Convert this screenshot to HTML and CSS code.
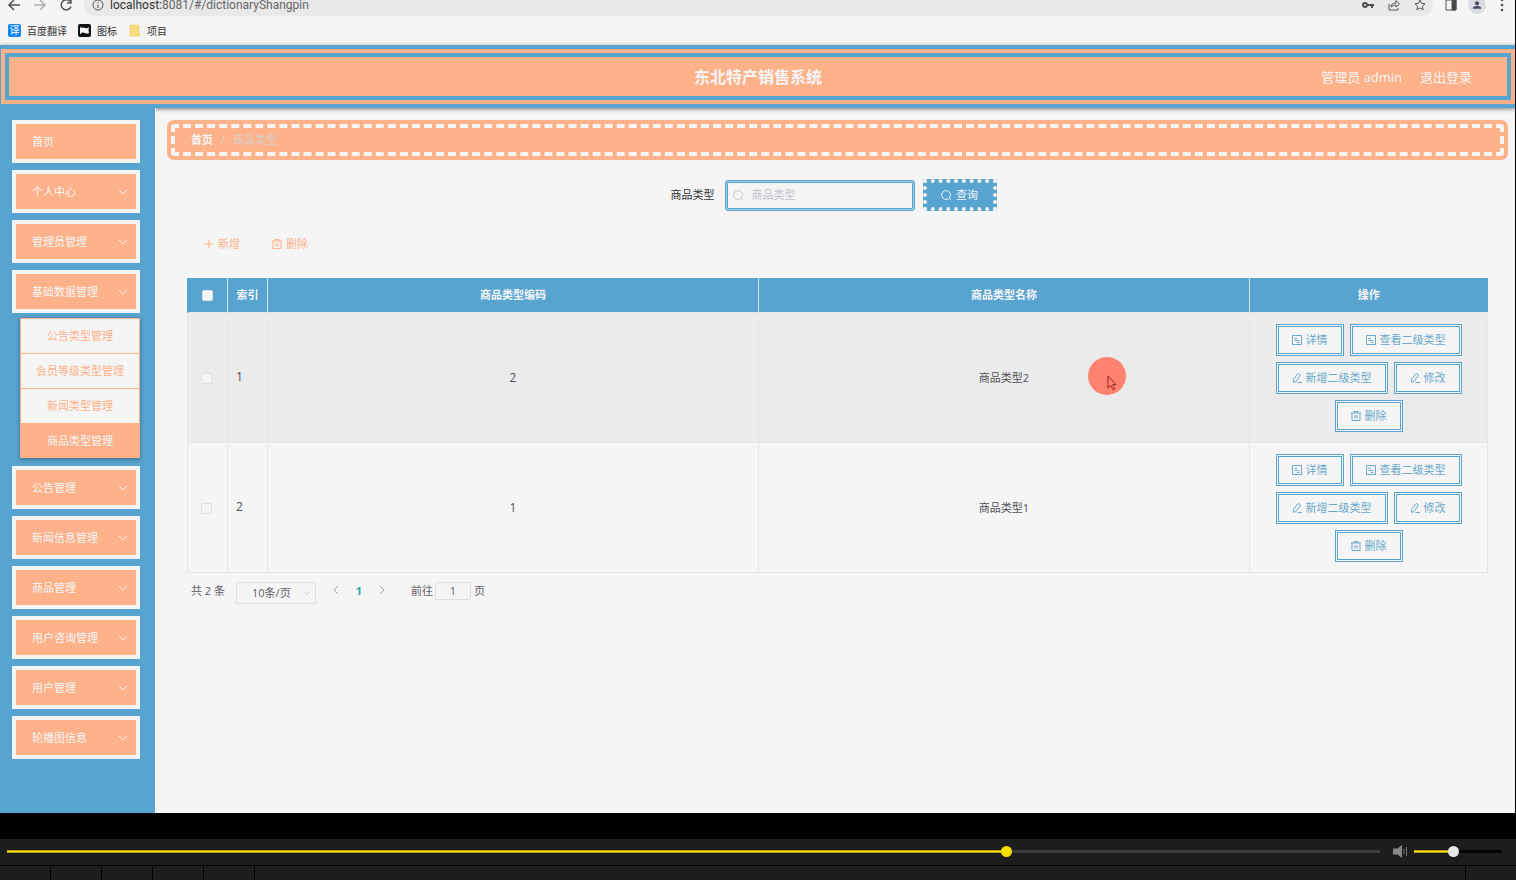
FILE: index.html
```html
<!DOCTYPE html>
<html lang="zh-CN">
<head>
    <meta charset="UTF-8">
    <meta name="viewport" content="width=device-width, initial-scale=1.0">
    <title>东北特产销售系统</title>
    <link rel="stylesheet" href="styles.css">
</head>
<body>
    <svg class="symbols" width="0" height="0">
        <symbol id="i-down" viewBox="0 0 10 10"><path d="M1 3l4 4 4-4"/></symbol>
        <symbol id="i-search" viewBox="0 0 12 12"><circle cx="5.5" cy="5.5" r="4.8"/><path d="M9 9l2 2"/></symbol>
        <symbol id="i-plus" viewBox="0 0 10 10"><path d="M5 .5v9M.5 5h9"/></symbol>
        <symbol id="i-trash" viewBox="0 0 10 10"><path d="M0 2h10M3 2V.5h4V2M1 2v7.500h8V2M4 4v3.500M6 4v3.500"/></symbol>
        <symbol id="i-doc" viewBox="0 0 10 10"><path d="M.5.5h9v9h-9zM2.500 3.500H5M2.500 5.500h5M5 7.500h2.500"/></symbol>
        <symbol id="i-edit" viewBox="0 0 10 10"><path d="M1.500 6.500l4-5.500q1-.8 2 0t.5 2L4 8.500l-2.500.8zM5.500 9.500H10"/></symbol>
    </svg>

    <div class="browser">
        <div class="toolbar">
            <svg class="nav-icon" viewBox="0 0 16 16"><path d="M14 8H3M8 3L3 8l5 5"/></svg>
            <svg class="nav-icon off" viewBox="0 0 16 16"><path d="M2 8h11M8 3l5 5-5 5"/></svg>
            <svg class="nav-icon" viewBox="0 0 16 16"><path d="M13 9.500A5 5 0 1 1 12 4.500M13 2v4H9"/></svg>
            <div class="address">
                <svg class="info-icon" viewBox="0 0 12 12"><circle cx="6" cy="6" r="5"/><path d="M6 5.500V9M6 3v1.200"/></svg>
                <span class="url">localhost:<span>8081/#/dictionaryShangpin</span></span>
                <svg class="tool-icon" viewBox="0 0 12 12"><circle cx="3" cy="6" r="2" stroke-width="2"/><path d="M5 6h7M10 6v3" stroke-width="2"/></svg>
                <svg class="tool-icon" viewBox="0 0 12 12"><path d="M1 5v6h9V9M3 8q0-4 5-4V1.500L11.500 5 8 8V6Q5 6 3 8z"/></svg>
                <svg class="tool-icon" viewBox="0 0 12 12"><path d="M6 1l1.500 3.300 3.500.4-2.600 2.400.7 3.600L6 9l-3.100 1.700.7-3.600L1 4.700l3.500-.4z"/></svg>
            </div>
            <svg class="tool-icon side" viewBox="0 0 12 12"><path d="M1 1h10v10H1z"/><path d="M7 1h4v10H7z" fill="#444"/></svg>
            <span class="profile"><svg viewBox="0 0 12 12"><circle cx="6" cy="4" r="2.500"/><path d="M1 10.500V9q2-2 5-2t5 2v1.500z"/></svg></span>
            <svg class="more-icon" viewBox="0 0 4 16"><circle cx="2" cy="3" r="1.300"/><circle cx="2" cy="8" r="1.300"/><circle cx="2" cy="13" r="1.300"/></svg>
        </div>
        <div class="bookmarks">
            <a href="#"><span class="mark mark-fy">译</span>百度翻译</a>
            <a href="#"><svg class="mark" viewBox="0 0 13 13"><rect width="13" height="13" rx="2" fill="#111"/><path d="M2 10V3h1v1q2-1 4 0t4-1l-.5 3 .5 3q-2 1-4 0t-4 0v1z" fill="#f5f5f5"/></svg>图标</a>
            <a href="#"><svg class="mark" viewBox="0 0 13 13"><path d="M2 1h9v8l1 1v2H2z" fill="#f6dc7c" stroke="#e8c95c" stroke-width=".5"/></svg>项目</a>
        </div>

        <header class="header">
            <div class="header-inner">
                <h1>东北特产销售系统</h1>
                <div class="user">
                    <span>管理员 admin</span>
                    <a href="#">退出登录</a>
                </div>
            </div>
        </header>

        <div class="page">
            <nav class="sidebar">
                <ul class="menu">
                    <li><a href="#">首页</a></li>
                    <li><a href="#">个人中心<svg><use href="#i-down"/></svg></a></li>
                    <li><a href="#">管理员管理<svg><use href="#i-down"/></svg></a></li>
                    <li>
                        <a href="#">基础数据管理<svg><use href="#i-down"/></svg></a>
                        <ul class="submenu">
                            <li><a href="#">公告类型管理</a></li>
                            <li><a href="#">会员等级类型管理</a></li>
                            <li><a href="#">新闻类型管理</a></li>
                            <li><a href="#" class="active">商品类型管理</a></li>
                        </ul>
                    </li>
                    <li><a href="#">公告管理<svg><use href="#i-down"/></svg></a></li>
                    <li><a href="#">新闻信息管理<svg><use href="#i-down"/></svg></a></li>
                    <li><a href="#">商品管理<svg><use href="#i-down"/></svg></a></li>
                    <li><a href="#">用户咨询管理<svg><use href="#i-down"/></svg></a></li>
                    <li><a href="#">用户管理<svg><use href="#i-down"/></svg></a></li>
                    <li><a href="#">轮播图信息<svg><use href="#i-down"/></svg></a></li>
                </ul>
            </nav>

            <main class="main">
                <div class="breadcrumb">
                    <div class="breadcrumb-inner">
                        <a href="#">首页</a><span class="sep">/</span><span>商品类型</span>
                    </div>
                </div>

                <form class="search">
                    <label for="typeName">商品类型</label>
                    <div class="search-box">
                        <svg><use href="#i-search"/></svg>
                        <input type="text" id="typeName" placeholder="商品类型">
                    </div>
                    <button type="button" class="btn-search"><svg><use href="#i-search"/></svg>查询</button>
                </form>

                <div class="tools">
                    <button type="button"><svg><use href="#i-plus"/></svg>新增</button>
                    <button type="button"><svg><use href="#i-trash"/></svg>删除</button>
                </div>

                <table class="table">
                    <colgroup>
                        <col class="col-small">
                        <col class="col-small">
                        <col>
                        <col>
                        <col class="col-action">
                    </colgroup>
                    <thead>
                        <tr>
                            <th><input type="checkbox" aria-label="全选"></th>
                            <th>索引</th>
                            <th>商品类型编码</th>
                            <th>商品类型名称</th>
                            <th>操作</th>
                        </tr>
                    </thead>
                    <tbody>
                        <tr class="hover">
                            <td class="left"><input type="checkbox" aria-label="选择1"></td>
                            <td class="left num">1</td>
                            <td class="num">2</td>
                            <td>商品类型2</td>
                            <td>
                                <div class="actions">
                                    <button type="button"><svg><use href="#i-doc"/></svg>详情</button>
                                    <button type="button"><svg><use href="#i-doc"/></svg>查看二级类型</button>
                                    <button type="button"><svg><use href="#i-edit"/></svg>新增二级类型</button>
                                    <button type="button"><svg><use href="#i-edit"/></svg>修改</button>
                                    <button type="button"><svg><use href="#i-trash"/></svg>删除</button>
                                </div>
                            </td>
                        </tr>
                        <tr>
                            <td class="left"><input type="checkbox" aria-label="选择2"></td>
                            <td class="left num">2</td>
                            <td class="num">1</td>
                            <td>商品类型1</td>
                            <td>
                                <div class="actions">
                                    <button type="button"><svg><use href="#i-doc"/></svg>详情</button>
                                    <button type="button"><svg><use href="#i-doc"/></svg>查看二级类型</button>
                                    <button type="button"><svg><use href="#i-edit"/></svg>新增二级类型</button>
                                    <button type="button"><svg><use href="#i-edit"/></svg>修改</button>
                                    <button type="button"><svg><use href="#i-trash"/></svg>删除</button>
                                </div>
                            </td>
                        </tr>
                    </tbody>
                </table>

                <div class="pagination">
                    <span>共 2 条</span>
                    <div class="size">
                        <select aria-label="每页条数"><option>10条/页</option></select>
                        <svg><use href="#i-down"/></svg>
                    </div>
                    <button type="button" class="arrow" aria-label="上一页"><svg viewBox="0 0 10 10"><path d="M7 1L3 5l4 4"/></svg></button>
                    <button type="button" class="current">1</button>
                    <button type="button" class="arrow" aria-label="下一页"><svg viewBox="0 0 10 10"><path d="M3 1l4 4-4 4"/></svg></button>
                    <label class="jump">前往<input type="text" value="1">页</label>
                </div>
            </main>

            <div class="click-mark">
                <svg viewBox="0 0 12 18"><path d="M1 1v13l3-3 2.500 5 2-1L6.200 10.200H10z"/></svg>
            </div>
        </div>
    </div>

    <div class="player">
        <div class="player-bar">
            <input type="range" class="progress" aria-label="进度" min="0" max="1000" value="730" style="--fill: 73%">
            <svg class="speaker" viewBox="0 0 14 13"><path d="M0 3.500h4.500L9 0v13L4.500 9.500H0z" fill="#888"/><path d="M11 4v5" stroke="#777"/><path d="M13.500 2v9" stroke="#777"/></svg>
            <input type="range" class="volume" aria-label="音量" min="0" max="100" value="44" style="--fill: 44%">
        </div>
        <div class="player-tabs">
            <span></span><span></span><span></span><span></span><span></span>
            <span class="rest"></span>
            <span class="last"></span>
        </div>
    </div>
</body>
</html>
```

FILE: styles.css
```css
* {
    margin: 0;
    padding: 0;
    box-sizing: border-box;
}

body {
    height: 100vh;
    display: flex;
    flex-direction: column;
    overflow: hidden;
    background-color: #000;
    color: #606266;
    font-family: "Open Sans", "Noto Sans CJK SC", sans-serif;
    font-size: 11px;
    line-height: 16px;
}

a {
    color: inherit;
    text-decoration: none;
}

ul {
    list-style: none;
}

button, input, select {
    font: inherit;
    color: inherit;
}

button {
    border: none;
    background: none;
    cursor: pointer;
}

svg {
    flex: none;
    width: 10px;
    height: 10px;
    fill: none;
    stroke: currentColor;
}

.symbols {
    position: absolute;
}

.browser {
    flex: 1;
    min-height: 0;
    display: flex;
    flex-direction: column;
    margin-right: 1px;
    background-color: #f5f5f5;
}

/* browser bars */
.toolbar {
    height: 16px;
    display: flex;
    align-items: flex-end;
    overflow: hidden;
    padding: 0 11px 0 6px;
    color: #505356;
}

.toolbar > svg {
    height: 22px;
}

.nav-icon {
    width: 16px;
    margin-right: 10px;
    stroke-width: 1.5;
}

.nav-icon.off {
    color: #b0b0b0;
}

.address {
    flex: 1;
    height: 22px;
    display: flex;
    align-items: center;
    padding: 0 7px 0 8px;
    border-radius: 11px;
    background-color: #e9e9e9;
}

.info-icon {
    width: 12px;
    height: 12px;
    margin-right: 6px;
}

.url {
    flex: 1;
    font-family: Roboto, sans-serif;
    font-size: 12px;
    line-height: 10px;
    color: #333;
}

.url span {
    color: #666;
}

.tool-icon {
    width: 12px;
    height: 12px;
    margin-left: 14px;
}

.tool-icon.side {
    margin-left: 12px;
}

.profile {
    width: 18px;
    height: 18px;
    display: flex;
    align-items: center;
    justify-content: center;
    margin: 0 14px 2px 11px;
    border-radius: 50%;
    background-color: #dadce4;
}

.profile svg {
    fill: #4a4f66;
    stroke: none;
}

.more-icon {
    width: 4px;
    fill: #505356;
    stroke: none;
}

.bookmarks {
    height: 29px;
    display: flex;
    align-items: center;
    gap: 11px;
    padding-left: 8px;
    font-size: 10px;
    color: #333;
}

.bookmarks a {
    display: flex;
    align-items: center;
    gap: 6px;
}

.mark {
    width: 13px;
    height: 13px;
    stroke: none;
}

.mark-fy {
    border-radius: 2px;
    background-color: #1687f5;
    color: #fff;
    line-height: 13px;
    text-align: center;
}

/* header */
.header {
    position: relative;
    padding: 4px;
    border: solid #58a4d0;
    border-width: 4px 0 4px 1px;
    background-color: #ffb18a;
    box-shadow: 0 1px 4px rgba(0, 0, 0, 0.5);
    color: #f5f5f5;
}

.header-inner {
    height: 47px;
    display: grid;
    grid-template-columns: 1fr auto 1fr;
    align-items: center;
    padding: 0 35px;
    border: 4px solid #58a4d0;
}

.header h1 {
    grid-column: 2;
    font-size: 16px;
    line-height: 24px;
}

.user {
    display: flex;
    justify-content: flex-end;
    gap: 18px;
    font-size: 13px;
}

/* sidebar */
.page {
    position: relative;
    flex: 1;
    min-height: 0;
    display: flex;
}

.sidebar {
    width: 156px;
    padding: 12px 15px 0 12px;
    border-right: 1px solid #fff;
    background-color: #58a4d0;
    color: #f5f5f5;
}

.menu {
    display: flex;
    flex-direction: column;
    gap: 7px;
}

.menu > li > a {
    height: 43px;
    display: flex;
    align-items: center;
    justify-content: space-between;
    padding: 0 8px 0 16px;
    border: 4px solid #f5f5f5;
    background-color: #ffb18a;
}

.submenu {
    margin: 5px 0 1px 8px;
    border: solid #ffb18a;
    border-width: 1px 1px 0;
    background-color: #f5f5f5;
    box-shadow: 0 1px 4px rgba(0, 0, 0, 0.4);
    color: #ffb18a;
    text-align: center;
}

.submenu a {
    display: block;
    border-bottom: 1px solid #ffb18a;
    line-height: 34px;
}

.submenu li:last-child a {
    border-bottom: none;
}

.submenu .active {
    background-color: #ffb18a;
    color: #f5f5f5;
}

/* content */
.main {
    flex: 1;
    min-width: 0;
    padding: 12px 7px 0 11px;
}

.breadcrumb {
    padding: 4px;
    border-radius: 7px;
    background-color: #ffb18a;
}

.breadcrumb-inner {
    height: 32px;
    display: flex;
    align-items: center;
    padding: 0 16px;
    border: 4px dashed #f5f5f5;
    border-radius: 4px;
    color: #dccfc8;
}

.breadcrumb a {
    font-weight: bold;
    color: #f5f5f5;
}

.sep {
    margin: 0 8px;
}

.search {
    display: flex;
    justify-content: center;
    align-items: center;
    margin: 19px 8px 0 0;
    color: #333;
}

.search-box {
    width: 190px;
    height: 31px;
    display: flex;
    align-items: center;
    gap: 8px;
    margin: 0 8px 0 10px;
    padding: 0 5px;
    border: 3px double #58a4d0;
    border-radius: 3px;
    background: linear-gradient(#f5f5f5, #f5f5f5) padding-box, #a3d2e3 border-box;
    color: #c0c4cc;
}

.search-box svg, .btn-search svg {
    width: 11px;
    height: 11px;
}

.search-box input {
    flex: 1;
    min-width: 0;
    border: none;
    outline: none;
    background: none;
}

.search-box input::placeholder {
    color: #c0c4cc;
}

.btn-search {
    width: 74px;
    height: 32px;
    display: flex;
    align-items: center;
    justify-content: center;
    gap: 4px;
    border: 4px dotted #f5f5f5;
    background: #58a4d0;
    color: #f5f5f5;
}

.tools {
    display: flex;
    gap: 32px;
    margin: 25px 0 26px 37px;
    color: #ffb18a;
}

.tools button {
    display: flex;
    align-items: center;
    gap: 4px;
}

.table {
    width: calc(100% - 40px);
    margin-left: 20px;
    border-collapse: collapse;
    table-layout: fixed;
    text-align: center;
}

.col-small {
    width: 40px;
}

.col-action {
    width: 238px;
}

.table th {
    height: 34px;
    border-left: 1px solid #d5e4ec;
    background-color: #58a4d0;
    color: #f5f5f5;
}

.table th:first-child {
    border-left-color: #58a4d0;
}

.table td {
    padding: 11px 16px 10px;
    border: 1px solid #e6e6e6;
    color: #505256;
}

.table .left {
    padding: 0 8px;
    text-align: left;
}

.table .left:first-child {
    padding-left: 13px;
}

.table .num {
    font-size: 12px;
}

.hover {
    background-color: #ebebeb;
}

.table input {
    appearance: none;
    width: 11px;
    height: 11px;
    border: 1px solid #dcdfe6;
    border-radius: 2px;
    background-color: #f5f5f5;
    vertical-align: middle;
}

.actions {
    display: flex;
    flex-wrap: wrap;
    justify-content: center;
    gap: 6px;
}

.actions button {
    height: 32px;
    display: flex;
    align-items: center;
    gap: 4px;
    padding: 0 13px;
    border: 3px double #58a4d0;
    background-color: #f5f5f5;
    color: #6aa9cc;
}

.pagination {
    display: flex;
    align-items: flex-start;
    margin: 9px 0 0 24px;
    line-height: 17px;
}

.size {
    position: relative;
    margin: 0 14px 0 11px;
}

.size select {
    width: 80px;
    height: 22px;
    padding-left: 15px;
    appearance: none;
    border: 1px solid #dcdfe6;
    border-radius: 2px;
    background-color: #f5f5f5;
}

.size svg {
    position: absolute;
    top: 6px;
    right: 5px;
    width: 8px;
    color: #c0c4cc;
}

.pagination button {
    width: 12px;
    margin-right: 11px;
}

.pagination .arrow {
    color: #a0a4aa;
}

.pagination .current {
    font-weight: bold;
    color: #1fb093;
}

.jump {
    display: flex;
    margin-left: 12px;
}

.jump input {
    width: 36px;
    height: 18px;
    margin: 0 3px 0 2px;
    border: 1px solid #dcdfe6;
    border-radius: 2px;
    background: none;
    text-align: center;
}

/* mouse pointer with its highlight */
.click-mark {
    position: absolute;
    left: 1088px;
    top: 249px;
    width: 38px;
    height: 38px;
    padding: 18px 0 0 19px;
    border-radius: 50%;
    background-color: #ff8270;
}

.click-mark svg {
    display: block;
    width: 11px;
    height: 17px;
    color: #901c1c;
}

/* video player */
.player {
    padding-top: 26px;
}

.player-bar {
    height: 26px;
    display: flex;
    align-items: center;
    padding: 0 14px 2px 7px;
    background-color: #1d1d1d;
}

.player-bar input {
    appearance: none;
    height: 11px;
    background: none;
}

.player-bar .progress {
    flex: 1;
    min-width: 0;
}

.player-bar .volume {
    width: 88px;
}

.player-bar input::-webkit-slider-runnable-track {
    height: 3px;
    background: linear-gradient(#8f8200, #ffe600, #8f8200) left / var(--fill) 100% no-repeat #3c3c3c;
}

.player-bar .volume::-webkit-slider-runnable-track {
    background-color: #000;
}

.player-bar input::-webkit-slider-thumb {
    appearance: none;
    width: 11px;
    height: 11px;
    margin-top: -4px;
    border-radius: 50%;
    background-color: #f5df00;
}

.player-bar .volume::-webkit-slider-thumb {
    background-color: #e8e8e8;
}

.speaker {
    width: 14px;
    height: 13px;
    margin: 0 7px 0 13px;
    stroke: none;
}

.player-tabs {
    height: 15px;
    display: flex;
    gap: 1px;
    padding-top: 1px;
}

.player-tabs span {
    width: 50px;
    background-color: #1d1d1d;
}

.player-tabs .rest {
    flex: 1;
}
```
